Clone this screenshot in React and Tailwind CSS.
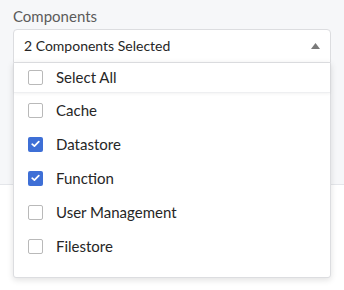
import { useState } from 'react'

const items = [
  { name: 'Cache', checked: false },
  { name: 'Datastore', checked: true },
  { name: 'Function', checked: true },
  { name: 'User Management', checked: false },
  { name: 'Filestore', checked: false },
]

function Checkbox({ checked }) {
  if (checked) {
    return (
      <span className="flex h-[15px] w-[15px] shrink-0 items-center justify-center rounded-[2px] bg-[#3e6fd6]">
        <svg width="9" height="8" viewBox="0 0 9 8" fill="none">
          <path d="M1.2 4.2 L3.4 6.2 L7.8 1.6" stroke="white" strokeWidth="1.7" strokeLinecap="round" strokeLinejoin="round" />
        </svg>
      </span>
    )
  }
  return <span className="h-[15px] w-[15px] shrink-0 rounded-[2px] border border-[#b9b9b9] bg-white" />
}

export default function App() {
  const [list] = useState(items)
  const count = list.filter((i) => i.checked).length

  return (
    <div className="relative h-[290px] w-[344px] overflow-hidden bg-white font-['Lato',sans-serif]">
      <div className="h-[185px] border-b border-[#e4e6ea] bg-[#f6f7f9] px-[13px] pt-[6px]">
        <div className="text-[15px] leading-[20px] text-[#5b5b5b]">Components</div>
        <div className="mt-[3px] flex h-[34px] items-center justify-between rounded-t-[4px] border border-[#dcdde0] bg-white pb-[1px] pl-[10px] pr-[10px]">
          <span className="text-[14px] text-[#262626]">{count} Components Selected</span>
          <svg width="9" height="6" viewBox="0 0 9 6">
            <path d="M0 6 L4.5 0 L9 6 Z" fill="#7a7a7a" />
          </svg>
        </div>
      </div>

      <div className="absolute left-[13px] top-[62px] w-[318px] rounded-b-[3px] border border-[#dcdde0] bg-white pb-[14px] shadow-[0_2px_6px_rgba(0,0,0,0.12)]">
        <div className="flex h-[30px] items-center gap-[13px] border-b border-[#eeeff1] pl-[14px] shadow-[0_1px_3px_rgba(0,0,0,0.05)]">
          <Checkbox checked={false} />
          <span className="text-[15px] text-[#262626]">Select All</span>
        </div>
        <div>
          {list.map((item) => (
            <div key={item.name} className="flex h-[34px] items-center gap-[13px] pl-[14px]">
              <Checkbox checked={item.checked} />
              <span className="text-[15px] text-[#262626]">{item.name}</span>
            </div>
          ))}
        </div>
      </div>
    </div>
  )
}
